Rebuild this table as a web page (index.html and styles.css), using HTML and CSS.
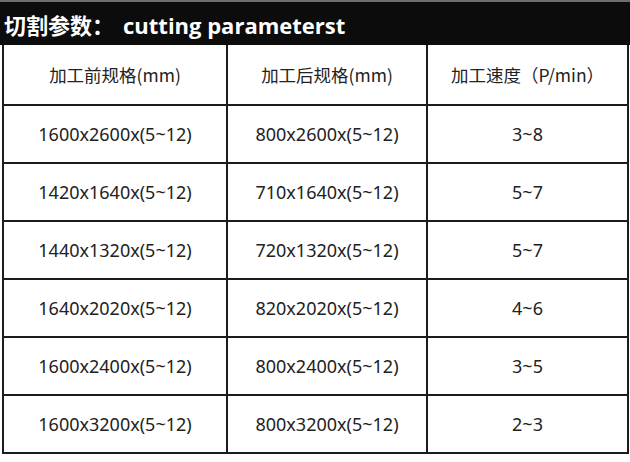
FILE: index.html
```html
<!DOCTYPE html>
<html lang="zh">
<head>
<meta charset="utf-8">
<link rel="stylesheet" href="styles.css">
</head>
<body>
<div class="title-bar"><span class="title-cn">切割参数：</span><span class="title-en">cutting parameterst</span></div>
<table class="params">
  <colgroup>
    <col class="c1"><col class="c2"><col class="c3">
  </colgroup>
  <thead>
    <tr><th>加工前规格(mm)</th><th>加工后规格(mm)</th><th>加工速度（P/min）</th></tr>
  </thead>
  <tbody>
    <tr><td>1600x2600x(5~12)</td><td>800x2600x(5~12)</td><td>3~8</td></tr>
    <tr><td>1420x1640x(5~12)</td><td>710x1640x(5~12)</td><td>5~7</td></tr>
    <tr><td>1440x1320x(5~12)</td><td>720x1320x(5~12)</td><td>5~7</td></tr>
    <tr><td>1640x2020x(5~12)</td><td>820x2020x(5~12)</td><td>4~6</td></tr>
    <tr><td>1600x2400x(5~12)</td><td>800x2400x(5~12)</td><td>3~5</td></tr>
    <tr><td>1600x3200x(5~12)</td><td>800x3200x(5~12)</td><td>2~3</td></tr>
  </tbody>
</table>
</body>
</html>
```
FILE: styles.css
```css
html, body {
  margin: 0;
  padding: 0;
  background: #ffffff;
}
body {
  width: 630px;
  height: 462px;
  overflow: hidden;
  font-family: "Noto Sans", "Noto Sans CJK SC", sans-serif;
  color: #222222;
}
.title-bar {
  height: 43px;
  background: #0c0c0c;
  border-top: 2px solid #6e6e6e;
  color: #ffffff;
  font-family: "Open Sans", "Noto Sans CJK SC", sans-serif;
  font-weight: 700;
  font-size: 22px;
  line-height: 44px;
  padding-left: 4px;
  white-space: nowrap;
}
.title-cn {
  font-family: "Noto Sans CJK SC", sans-serif;
  font-weight: 700;
  margin-right: 9px;
}
.params {
  margin-left: 2px;
  border-collapse: collapse;
  table-layout: fixed;
  width: 625px;
}
.c1 { width: 224px; }
.c2 { width: 200px; }
.c3 { width: 201px; }
.params th, .params td {
  border: 2px solid #1c1c1c;
  text-align: center;
  font-size: 18px;
  font-weight: 400;
  padding: 0;
  color: #222222;
}
.params th {
  height: 59px;
  border-top: none;
  font-size: 17.5px;
  font-family: "Noto Sans CJK SC", "Noto Sans", sans-serif;
}
.params td {
  height: 56px;
}
```
